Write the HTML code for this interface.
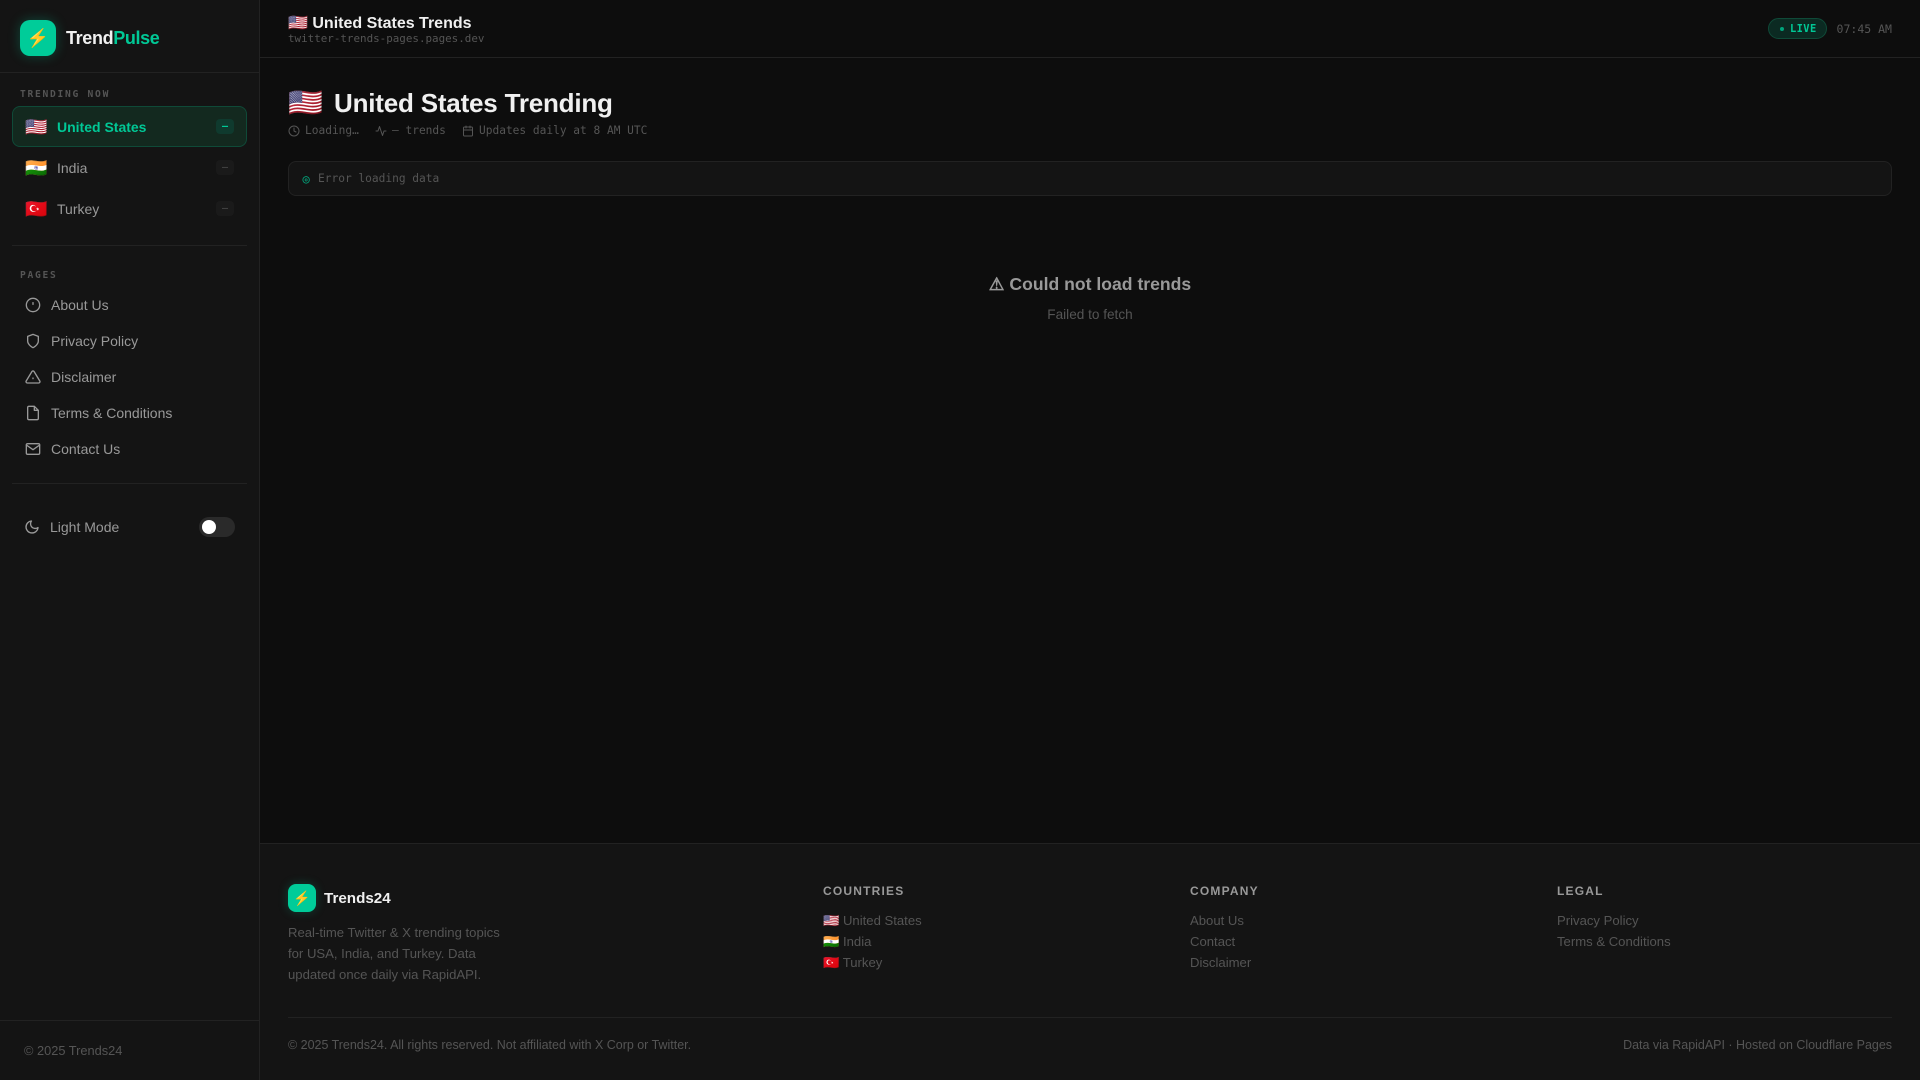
<!DOCTYPE html>
<html><head><meta charset="utf-8"><title>TrendPulse</title>
<style>
*{margin:0;padding:0;box-sizing:border-box}
html,body{width:1920px;height:1080px;overflow:hidden;background:#0d0d0d;font-family:"Liberation Sans",sans-serif;color:#f0f0f0}
.a{position:absolute;white-space:nowrap}
.m{font-family:"DejaVu Sans Mono",monospace}
svg{position:absolute;fill:none;stroke-linecap:round;stroke-linejoin:round}
.side{position:absolute;left:0;top:0;width:260px;height:1080px;background:#141414;border-right:1px solid #222}
.hl{position:absolute;height:1px;background:#222}
.lab{font-size:9.6px;letter-spacing:1.73px;color:#555;font-weight:700}
.nav{font-size:14px;color:#999;line-height:16px}
.pg{font-size:14px;color:#999;line-height:16px}
.flag{font-size:18px;line-height:23px}
.badge{position:absolute;left:216px;width:18px;height:15px;border-radius:4px;background:#1a1a1a;color:#555;font-size:10px;line-height:15px;text-align:center}
.ps svg{stroke:#999;stroke-width:2}
.fl{font-size:13.12px;color:#555;line-height:15px}
.fb{font-size:12.48px;color:#555;line-height:15px}
.fh{font-size:12px;font-weight:700;letter-spacing:1.2px;color:#999;line-height:14px}
.fp{font-size:13.12px;color:#555;line-height:21px}
.s{font-size:11.2px;line-height:13px;color:#555}
</style></head><body>
<div class="side"></div>
<div class="hl" style="left:0;top:72px;width:260px"></div>
<div class="a" style="left:20px;top:20px;width:36px;height:36px;border-radius:10px;background:#00cc99;box-shadow:0 0 12px rgba(0,200,150,.3);text-align:center;font-size:18px;line-height:36px">⚡</div>
<div class="a" style="left:66px;top:27px;font-size:18px;font-weight:700;letter-spacing:-.36px;line-height:22px;color:#f0f0f0">Trend<span style="color:#00c896">Pulse</span></div>
<div class="a m lab" style="left:20px;top:89px;line-height:12px">TRENDING NOW</div>
<div class="a" style="left:12px;top:106px;width:235px;height:41px;border-radius:8px;background:#13291f;border:1px solid #0f4a38"></div>
<div class="a flag" style="left:25px;top:116px">🇺🇸</div>
<div class="a nav" style="left:57px;top:119px;color:#00c896;font-weight:700">United States</div>
<div class="badge m" style="top:119px;background:#0f3a2e;color:#00c896;font-weight:700">–</div>
<div class="a flag" style="left:25px;top:157px">🇮🇳</div>
<div class="a nav" style="left:57px;top:160px">India</div>
<div class="badge m" style="top:160px">–</div>
<div class="a flag" style="left:25px;top:198px">🇹🇷</div>
<div class="a nav" style="left:57px;top:201px">Turkey</div>
<div class="badge m" style="top:201px">–</div>
<div class="hl" style="left:12px;top:245px;width:235px"></div>
<div class="a m lab" style="left:20px;top:270px;line-height:12px">PAGES</div>
<div class="ps">
<svg style="left:25px;top:297px" width="16" height="16" viewBox="0 0 24 24"><circle cx="12" cy="12" r="10"/><path d="M12 8.5v2.5"/></svg>
<svg style="left:25px;top:333px" width="16" height="16" viewBox="0 0 24 24"><path d="M12 22s8-4 8-10V5l-8-3-8 3v7c0 6 8 10 8 10z"/></svg>
<svg style="left:25px;top:369px" width="16" height="16" viewBox="0 0 24 24"><path d="M10.3 3.9 1.8 18a2 2 0 0 0 1.7 3h17a2 2 0 0 0 1.7-3L13.7 3.9a2 2 0 0 0-3.4 0zM12 13.5v1"/></svg>
<svg style="left:25px;top:405px" width="16" height="16" viewBox="0 0 24 24"><path d="M14 2H6a2 2 0 0 0-2 2v16a2 2 0 0 0 2 2h12a2 2 0 0 0 2-2V8zM14 2v6h6"/></svg>
<svg style="left:25px;top:441px" width="16" height="16" viewBox="0 0 24 24"><path d="M4 4h16a2 2 0 0 1 2 2v12a2 2 0 0 1-2 2H4a2 2 0 0 1-2-2V6a2 2 0 0 1 2-2z"/><path d="m22 6-10 7L2 6"/></svg>
</div>
<div class="a pg" style="left:51px;top:297px">About Us</div>
<div class="a pg" style="left:51px;top:333px">Privacy Policy</div>
<div class="a pg" style="left:51px;top:369px">Disclaimer</div>
<div class="a pg" style="left:51px;top:405px">Terms &amp; Conditions</div>
<div class="a pg" style="left:51px;top:441px">Contact Us</div>
<div class="hl" style="left:12px;top:483px;width:235px"></div>
<svg style="left:24px;top:519px" width="16" height="16" viewBox="0 0 24 24" stroke="#999" stroke-width="2"><path d="M21 12.8A9 9 0 1 1 11.2 3 7 7 0 0 0 21 12.8z"/></svg>
<div class="a pg" style="left:50px;top:519px">Light Mode</div>
<div class="a" style="left:199px;top:517px;width:36px;height:20px;border-radius:10px;background:#2a2a2a"></div>
<div class="a" style="left:202px;top:520px;width:14px;height:14px;border-radius:50%;background:#fff"></div>
<div class="hl" style="left:0;top:1020px;width:260px"></div>
<div class="a" style="left:24px;top:1043px;font-size:12.8px;line-height:15px;color:#555">© 2025 Trends24</div>

<div class="hl" style="left:260px;top:57px;width:1660px"></div>
<div class="a" style="left:288px;top:13px;font-size:16px;font-weight:700;line-height:21px;color:#f0f0f0">🇺🇸 United States Trends</div>
<div class="a m" style="left:288px;top:32px;font-size:10.88px;line-height:13px;color:#555">twitter-trends-pages.pages.dev</div>
<div class="a" style="left:1768px;top:18px;width:59px;height:21px;border-radius:11px;background:#0b2a22;border:1px solid #0f4a38"></div>
<div class="a" style="left:1780px;top:27px;width:4px;height:4px;border-radius:50%;background:#00a57c"></div>
<div class="a m" style="left:1790px;top:23px;font-size:10.4px;font-weight:700;letter-spacing:.4px;line-height:13px;color:#00c896">LIVE</div>
<div class="a m" style="right:28px;top:22px;font-size:11.52px;line-height:14px;color:#555">07:45 AM</div>

<div class="a" style="left:288px;top:84px;font-size:28px;line-height:38px">🇺🇸</div>
<div class="a" style="left:334px;top:87px;font-size:26px;font-weight:700;letter-spacing:-.2px;line-height:33px;color:#f0f0f0">United States Trending</div>
<svg style="left:288px;top:125px" width="12" height="12" viewBox="0 0 24 24" stroke="#555" stroke-width="2"><circle cx="12" cy="12" r="10"/><path d="M12 6v6l4 2"/></svg>
<div class="a m s" style="left:305px;top:124px">Loading…</div>
<svg style="left:375px;top:125px" width="12" height="12" viewBox="0 0 24 24" stroke="#555" stroke-width="2"><path d="M22 12h-4l-3 9L9 3l-3 9H2"/></svg>
<div class="a m s" style="left:392px;top:124px">— trends</div>
<svg style="left:462px;top:125px" width="12" height="12" viewBox="0 0 24 24" stroke="#555" stroke-width="2"><rect x="3" y="4" width="18" height="18" rx="2"/><path d="M16 2v4M8 2v4M3 10h18"/></svg>
<div class="a m s" style="left:479px;top:124px">Updates daily at 8 AM UTC</div>
<div class="a" style="left:288px;top:161px;width:1604px;height:35px;border-radius:8px;background:#141414;border:1px solid #222"></div>
<div class="a m" style="left:302.5px;top:172px;font-size:12px;line-height:14px;color:#00b386">◎</div>
<div class="a m s" style="left:318px;top:172px">Error loading data</div>
<div class="a" style="left:260px;width:1660px;top:273px;text-align:center;font-size:17.6px;font-weight:700;line-height:23px;color:#999">⚠ Could not load trends</div>
<div class="a" style="left:260px;width:1660px;top:307px;text-align:center;font-size:13.6px;line-height:16px;color:#555">Failed to fetch</div>

<div class="a" style="left:260px;top:843px;width:1660px;height:237px;background:#141414;border-top:1px solid #222"></div>
<div class="a" style="left:288px;top:884px;width:28px;height:28px;border-radius:8px;background:#00cc99;box-shadow:0 0 10px rgba(0,200,150,.25);text-align:center;font-size:14px;line-height:28px">⚡</div>
<div class="a" style="left:324px;top:890px;font-size:15.2px;font-weight:700;line-height:18px;color:#f0f0f0">Trends24</div>
<div class="a fp" style="left:288px;top:922px">Real-time Twitter &amp; X trending topics<br>for USA, India, and Turkey. Data<br>updated once daily via RapidAPI.</div>
<div class="a fh" style="left:823px;top:884px">COUNTRIES</div>
<div class="a fl" style="left:823px;top:913px">🇺🇸 United States</div>
<div class="a fl" style="left:823px;top:934px">🇮🇳 India</div>
<div class="a fl" style="left:823px;top:955px">🇹🇷 Turkey</div>
<div class="a fh" style="left:1190px;top:884px">COMPANY</div>
<div class="a fl" style="left:1190px;top:913px">About Us</div>
<div class="a fl" style="left:1190px;top:934px">Contact</div>
<div class="a fl" style="left:1190px;top:955px">Disclaimer</div>
<div class="a fh" style="left:1557px;top:884px">LEGAL</div>
<div class="a fl" style="left:1557px;top:913px">Privacy Policy</div>
<div class="a fl" style="left:1557px;top:934px">Terms &amp; Conditions</div>
<div class="hl" style="left:288px;top:1017px;width:1604px"></div>
<div class="a fb" style="left:288px;top:1038px">© 2025 Trends24. All rights reserved. Not affiliated with X Corp or Twitter.</div>
<div class="a fb" style="right:28px;top:1038px">Data via RapidAPI · Hosted on Cloudflare Pages</div>
</body></html>
